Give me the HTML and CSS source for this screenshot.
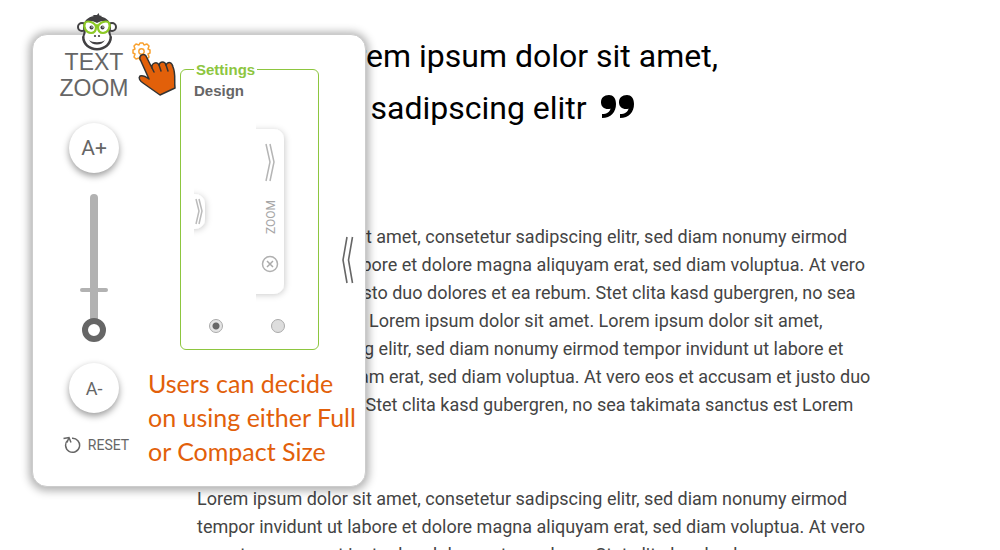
FILE: index.html
```
<!DOCTYPE html>
<html lang="en">
<head>
<meta charset="utf-8">
<title>Text Zoom</title>
<link rel="stylesheet" href="styles.css">
</head>
<body>
<main class="article">
  <h1 class="quote">Lorem ipsum dolor sit amet,<br>consetetur sadipscing elitr
    <svg class="quote-mark" viewBox="0 0 34 24" aria-hidden="true"><path d="M8 0C3 0 0 3 0 7.200C0 11.500 3 14 7 14C8 14 9 14 9.500 13.500C9 17 6 19 1 19V23C10 23 15 17 15 9C15 3 12 0 8 0ZM26 0C21 0 18 3 18 7.200C18 11.500 21 14 25 14C26 14 27 14 27.500 13.500C27 17 24 19 19 19V23C28 23 33 17 33 9C33 3 30 0 26 0Z"/></svg>
  </h1>
  <p class="copy">Lorem ipsum dolor sit amet, consetetur sadipscing elitr, sed diam nonumy eirmod<br>tempor invidunt ut labore et dolore magna aliquyam erat, sed diam voluptua. At vero<br>eos et accusam et justo duo dolores et ea rebum. Stet clita kasd gubergren, no sea<br>takimata sanctus est Lorem ipsum dolor sit amet. Lorem ipsum dolor sit amet,<br>consetetur sadipscing elitr, sed diam nonumy eirmod tempor invidunt ut labore et<br>dolore magna aliquyam erat, sed diam voluptua. At vero eos et accusam et justo duo<br>dolores et ea rebum. Stet clita kasd gubergren, no sea takimata sanctus est Lorem<br>ipsum dolor sit amet.</p>
  <p class="copy">Lorem ipsum dolor sit amet, consetetur sadipscing elitr, sed diam nonumy eirmod<br>tempor invidunt ut labore et dolore magna aliquyam erat, sed diam voluptua. At vero<br>eos et accusam et justo duo dolores et ea rebum. Stet clita kasd gubergren,</p>
</main>

<aside class="panel">
  <svg class="monkey" viewBox="0 0 40 38" aria-hidden="true">
    <circle cx="5" cy="14" r="4" fill="#fff" stroke="#414042" stroke-width="2"/>
    <circle cx="35" cy="14" r="4" fill="#fff" stroke="#414042" stroke-width="2"/>
    <path d="M6 15C6 8 11 4 17 3L15.500 2L20 2L21.500 0L22.500 2.500L25 3L24 3.500C30 5 34 9 34 15C33 19 33.500 21 35 24C35 32 28 37.500 20 37.500S5 32 5 24C6.500 21 7 19 6 15Z" fill="#414042"/>
    <path d="M20 10C14 6 8 9 8.500 15C9 18 9 20 7.500 23C7 30 13 35 20 35S33 30 32.500 23C31 20 31 18 31.500 15C32 9 26 6 20 10Z" fill="#fff"/>
    <path d="M19 14C18 9 10 7 8 10C6 14 9 20 14 20C17 20 19 18 19 14ZM21 14C22 9 30 7 32 10C34 14 31 20 26 20C23 20 21 18 21 14ZM19 13Q20 11 21 13" fill="#fff" stroke="#8dc926" stroke-width="2.200"/>
    <circle cx="14.500" cy="14.500" r="2" fill="#414042"/><circle cx="25.500" cy="14.500" r="2" fill="#414042"/>
    <circle cx="15" cy="14" r="0.700" fill="#fff"/><circle cx="26" cy="14" r="0.700" fill="#fff"/>
    <circle cx="18" cy="23" r="1.100" fill="#414042"/><circle cx="22" cy="23" r="1.100" fill="#414042"/>
    <path d="M12 27C15 30 25 30 28 27C25 33 15 33 12 27Z" fill="#414042"/>
  </svg>
  <div class="controls">
    <div class="brand">TEXT<br>ZOOM</div>
    <button class="round larger" type="button" aria-label="Larger text">A+</button>
    <div class="slider">
      <svg class="rail" viewBox="0 0 30 148" aria-hidden="true"><rect x="11" y="0" width="8" height="140" rx="4" fill="#b2b2b2"/><rect x="1" y="94" width="28" height="4" rx="2" fill="#b2b2b2"/></svg>
      <input class="range" type="range" min="0" max="100" value="0" aria-label="Text size">
    </div>
    <button class="round smaller" type="button" aria-label="Smaller text">A-</button>
    <button class="reset" type="button">
      <svg class="reset-icon" viewBox="0 0 18 18" fill="none" stroke="#666" stroke-width="1.500" aria-hidden="true"><path d="M5 4A7 7 0 1 0 9 2.300M0.500 2.500L6 1.500L8 6.500M6 1.500L4 6.500"/></svg>
      <span>RESET</span>
    </button>
  </div>
  <div class="options">
    <fieldset class="settings">
      <legend>Settings</legend>
      <h2 class="settings-title">Design</h2>
      <div class="choices">
        <label class="choice">
          <svg class="preview" viewBox="0 0 62 200" role="img" aria-label="Compact size">
            <defs><filter id="soft" x="-50%" y="-30%" width="200%" height="160%"><feDropShadow dx="1" dy="1" stdDeviation="3" flood-opacity="0.200"/></filter></defs>
            <rect x="-20" y="81" width="31" height="35" rx="10" fill="#fff" filter="url(#soft)"/>
            <path d="M2 86L5 98L2 111M5 86L8 98L5 111" fill="none" stroke="#bbb" stroke-width="1.500"/>
          </svg>
          <input type="radio" name="design" checked>
        </label>
        <label class="choice">
          <svg class="preview" viewBox="0 0 62 200" role="img" aria-label="Full size">
            <rect x="-30" y="16" width="58" height="165" rx="10" fill="#fff" filter="url(#soft)"/>
            <path d="M10 31L14 49L10 68M14 31L18 49L14 68" fill="none" stroke="#b5b5b5" stroke-width="1.500"/>
            <text class="preview-text" transform="translate(19 121) rotate(-90)">ZOOM</text>
            <circle cx="14" cy="151" r="7.500" fill="none" stroke="#b0b0b0" stroke-width="1.500"/>
            <path d="M11 148L17 154M17 148L11 154" stroke="#aaa" stroke-width="1.500"/>
          </svg>
          <input type="radio" name="design">
        </label>
      </div>
    </fieldset>
    <p class="note">Users can decide<br>on using either Full<br>or Compact Size</p>
  </div>
  <button class="collapse" type="button" aria-label="Collapse panel">
    <svg viewBox="0 0 12 48" fill="none" stroke="#666" stroke-width="1.600" aria-hidden="true"><path d="M5 1L1 24L5 47M10.500 1L6.500 24L10.500 47"/></svg>
  </button>
  <svg class="pointer" viewBox="0 0 46 58" aria-hidden="true">
    <path d="M8 2H11L12 4L15 3L17 5L16 8L18 9V12L16 13L17 16L15 18L12 17L11 19H8L7 17L4 18L2 16L3 13L1 12V9L3 8L2 5L4 3L7 4Z" fill="#fff" stroke="#f9a12e" stroke-width="1.500" stroke-linejoin="round"/>
    <circle cx="9.500" cy="10.500" r="2.700" fill="#fff" stroke="#f9a12e" stroke-width="1.400"/>
    <path d="M8 18C7 14 12 12 14 15L20 27C19 22 25 20 27 24C28 20 33 20 34 24C36 20 40 21 41 26C44 33 42 39 43 47L28 54L11 42C8 40 6 37 8 35C11 34 13 35 17 38Z" fill="#e2600a" stroke="#333" stroke-width="1.500" stroke-linejoin="round"/>
    <path d="M20 27L22 31M27 24L29 30M34 24L36 30" stroke="#333" stroke-width="1.500" stroke-linecap="round"/>
  </svg>
</aside>
</body>
</html>
```
FILE: styles.css
```
* { box-sizing: border-box; }

html { overflow: hidden; }

body {
  margin: 0;
  height: 100vh;
  overflow: hidden;
  position: relative;
  background: #fff;
  font-family: Roboto, "Liberation Sans", sans-serif;
}

.article { padding: 30px 24px 0 197px; }

.quote {
  margin: 0 0 89px;
  padding-left: 13px;
  text-indent: 110px;
  font-size: 32px;
  font-weight: 400;
  line-height: 52px;
  color: #000;
}

.quote-mark { width: 34px; height: 24px; margin-left: 6px; }

.copy {
  margin: 0 0 38px;
  font-size: 18px;
  line-height: 28px;
  color: #444;
  white-space: nowrap;
}

.panel {
  position: absolute;
  left: 32px;
  top: 34px;
  display: grid;
  grid-template-columns: 96px auto;
  column-gap: 6px;
  width: 334px;
  padding: 14px 6px 18px 13px;
  border: 1px solid #ccc;
  border-radius: 15px;
  background: #fff;
  box-shadow: 0 1px 9px 3px rgba(0, 0, 0, 0.3);
}

.monkey {
  position: absolute;
  left: 44px;
  top: -22px;
  width: 40px;
  height: 38px;
}

.controls {
  display: flex;
  flex-direction: column;
  align-items: center;
  color: #666;
}

.brand {
  font-family: "Liberation Sans", Arial, sans-serif;
  font-size: 23px;
  line-height: 26px;
  text-align: center;
  color: #666;
}

.round {
  width: 50px;
  height: 50px;
  padding: 0;
  border: 0;
  border-radius: 50%;
  background: #fff;
  box-shadow: 0 3px 7px rgba(0, 0, 0, 0.4);
  font-family: Roboto, sans-serif;
  color: #666;
}

.larger { margin-top: 22px; font-size: 21px; }
.smaller { margin-top: 21px; font-size: 18px; }

.slider {
  display: grid;
  place-items: center;
  width: 30px;
  height: 148px;
  margin-top: 21px;
}

.rail, .range { grid-area: 1 / 1; }
.rail { width: 30px; height: 148px; }

.range {
  appearance: none;
  width: 24px;
  height: 148px;
  margin: 0;
  writing-mode: vertical-lr;
  direction: rtl;
  background: transparent;
}

.range::-webkit-slider-thumb {
  appearance: none;
  width: 24px;
  height: 24px;
  border: 6px solid #666;
  border-radius: 50%;
  background: #fff;
}

.reset {
  display: flex;
  align-items: center;
  gap: 7px;
  margin-top: 22px;
  padding: 0 0 0 4px;
  border: 0;
  background: none;
  font-family: Roboto, sans-serif;
  font-size: 14px;
  line-height: 20px;
  color: #666;
}

.reset-icon { width: 18px; height: 18px; }

.options { padding-top: 12px; }

.settings {
  width: 139px;
  min-width: 0;
  margin: 0 0 0 32px;
  padding: 0 0 16px 13px;
  border: 1px solid #8dc63f;
  border-radius: 6px;
  font-family: "Liberation Sans", Arial, sans-serif;
  font-weight: 700;
  color: #666;
}

.settings legend {
  padding: 0 2px;
  font-size: 15px;
  line-height: 17px;
  color: #8dc63f;
}

.settings-title {
  margin: 3px 0 12px;
  font-size: 15px;
  line-height: 20px;
}

.choices {
  display: grid;
  grid-template-columns: 1fr 1fr;
}

.choice {
  display: flex;
  flex-direction: column;
  align-items: flex-start;
}

.preview { width: 62px; height: 200px; }

.preview-text {
  font: 12px Roboto, sans-serif;
  fill: #a6a6a6;
}

.choice input {
  appearance: none;
  width: 14px;
  height: 14px;
  margin: 6px 0 0 15px;
  border: 1px solid #aaa;
  border-radius: 50%;
  background: #ddd;
}

.choice input:checked {
  background: radial-gradient(circle, #666 3px, #e4e4e4 4px);
}

.note {
  margin: 16px 0 0;
  font-family: Lato, sans-serif;
  font-size: 25px;
  line-height: 34px;
  color: #e2600a;
  white-space: nowrap;
}

.collapse {
  position: absolute;
  right: 11px;
  top: 201px;
  width: 12px;
  height: 48px;
  padding: 0;
  border: 0;
  background: none;
}

.collapse svg { display: block; width: 12px; height: 48px; }

.pointer {
  position: absolute;
  left: 99px;
  top: 6px;
  width: 46px;
  height: 58px;
}
```
